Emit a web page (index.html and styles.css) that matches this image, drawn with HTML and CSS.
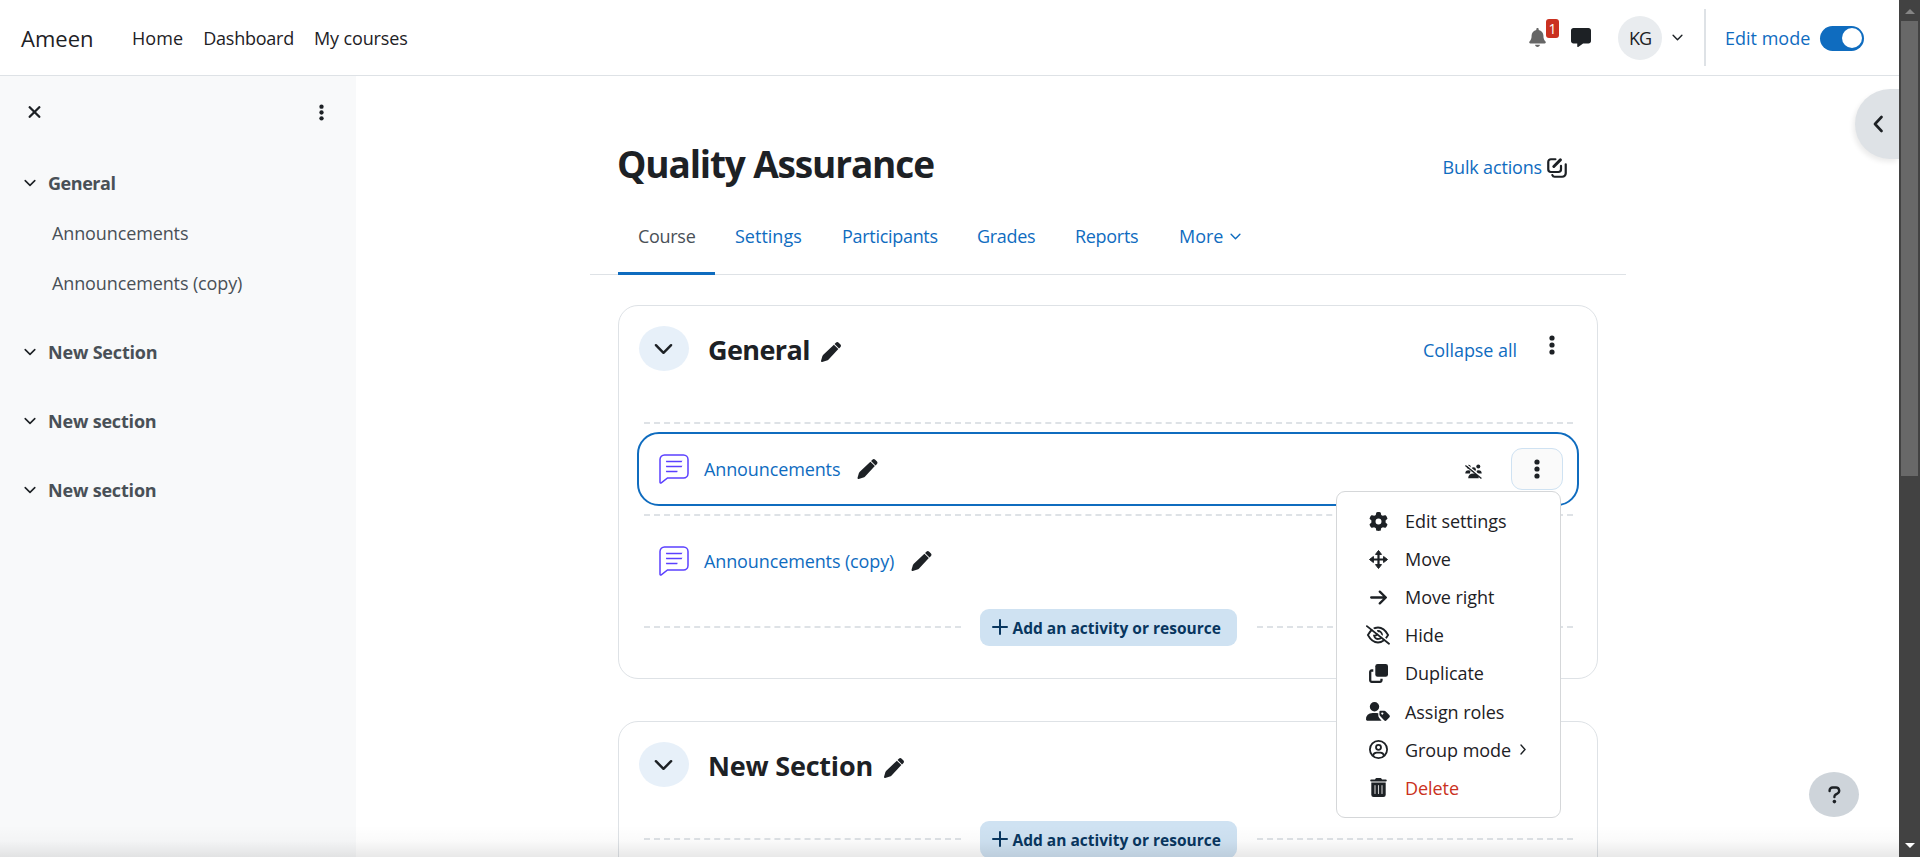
FILE: index.html
```html
<!DOCTYPE html>
<html lang="en">
<head>
<meta charset="utf-8">
<title>Quality Assurance</title>
<link rel="stylesheet" href="styles.css">
</head>
<body>
<svg class="defs" aria-hidden="true">
  <symbol id="chev" viewBox="0 0 20 12"><path d="M2 2l8 8 8-8" fill="none" stroke="currentColor" stroke-width="2.600" stroke-linecap="round" stroke-linejoin="round"/></symbol>
  <symbol id="dots" viewBox="0 0 6 20"><circle cx="3" cy="3" r="2.600"/><circle cx="3" cy="10" r="2.600"/><circle cx="3" cy="17" r="2.600"/></symbol>
  <symbol id="pen" viewBox="0 0 512 512"><path d="M380 19L347 51 461 165l32-32c25-25 25-49 0-74L453 19c-25-25-48-25-73 0zM330 68L58.600 323.500c-10.400 10.400-18 23.300-22.200 37.400L1 481.200C-1.500 489.700 .8 498.800 7 505s15.300 8.500 23.700 6.100l120.300-35.400c14.100-4.200 27-11.800 37.400-22.200L444 182z"/></symbol>
  <symbol id="forum" viewBox="0 0 30 30"><path d="M5.500 1h19A4.500 4.500 0 0 1 29 5.500v14a4.500 4.500 0 0 1-4.500 4.500H8.500L2.300 28.900Q1 29.500 1 28V5.500A4.500 4.500 0 0 1 5.500 1z" fill="none" stroke="#5b40ff" stroke-width="1.500"/><path d="M7 6.700h16.500M7 11.700h16.500M7 16.700h11.500" stroke="#cfc6ff" stroke-width="1"/><path d="M7.500 7.600h15M7.500 12.600h15M7.500 17.600h10.500" stroke="#5b40ff" stroke-width="1.200" stroke-linecap="round"/></symbol>
  <symbol id="plus" viewBox="0 0 16 16"><path d="M8 1v14M1 8h14" stroke="currentColor" stroke-width="2" stroke-linecap="round"/></symbol>
</svg>
<div class="window">
  <div class="page">
    <header class="topbar">
      <span class="brand">Ameen</span>
      <nav class="topnav"><span>Home</span><span>Dashboard</span><span>My courses</span></nav>
      <div class="tools">
        <span class="bell"><svg width="17" height="19" viewBox="0 0 448 512"><path d="M224 0c-17.700 0-32 14.300-32 32V51.200C119 66 64 130.600 64 208v18.800c0 47-17.300 92.400-48.500 127.600l-7.400 8.300c-8.400 9.400-10.400 22.900-5.300 34.400S19.400 416 32 416H416c12.600 0 24-7.400 29.200-18.900s3.100-25-5.300-34.400l-7.400-8.300C401.300 319.200 384 273.900 384 226.800V208c0-77.400-55-142-128-156.800V32c0-17.700-14.300-32-32-32zm45.300 493.300c12-12 18.700-28.300 18.700-45.300H160c0 17 6.700 33.300 18.700 45.300s28.300 18.700 45.300 18.700 33.300-6.700 45.300-18.700z"/></svg><b class="badge">1</b></span>
        <svg class="msg" width="20" height="19" viewBox="0 0 512 512" preserveAspectRatio="none"><path d="M64 0C28.700 0 0 28.700 0 64V352c0 35.300 28.700 64 64 64h96v80c0 6.100 3.400 11.600 8.800 14.300s11.900 2.100 16.800-1.500L309.300 416H448c35.300 0 64-28.700 64-64V64c0-35.300-28.700-64-64-64H64z"/></svg>
        <span class="avatar">KG</span>
        <svg class="userchev" width="11" height="7"><use href="#chev"/></svg>
        <span class="rule"></span>
        <span class="editmode">Edit mode</span>
        <span class="switch"><i></i></span>
      </div>
    </header>
    <div class="body">
      <aside class="sidebar">
        <div class="sidehead">
          <svg width="13" height="12" viewBox="0 0 12 12"><path d="M1.200 1.200l9.600 9.600M10.800 1.200L1.200 10.800" stroke="#1d2125" stroke-width="2.300" stroke-linecap="round"/></svg>
          <svg width="5" height="17"><use href="#dots"/></svg>
        </div>
        <div class="group"><div class="srow"><svg width="12" height="8"><use href="#chev"/></svg><b class="tight">General</b></div>
          <div class="sitem">Announcements</div><div class="sitem">Announcements (copy)</div></div>
        <div class="group"><div class="srow"><svg width="12" height="8"><use href="#chev"/></svg><b>New Section</b></div></div>
        <div class="group"><div class="srow"><svg width="12" height="8"><use href="#chev"/></svg><b>New section</b></div></div>
        <div class="group"><div class="srow"><svg width="12" height="8"><use href="#chev"/></svg><b>New section</b></div></div>
      </aside>
      <main class="content">
        <div class="titlerow"><h1>Quality Assurance</h1>
          <div class="bulk"><span>Bulk actions</span><svg width="20" height="20" viewBox="0 0 19 19" fill="none" stroke="#1d2125" stroke-width="2.100" stroke-linecap="round"><path d="M8 1.200H3.700A2.500 2.500 0 0 0 1.200 3.700v7.100a2.500 2.500 0 0 0 2.500 2.500h7.100a2.500 2.500 0 0 0 2.500-2.500V7.500"/><path d="M17.800 6v8.500a3.300 3.300 0 0 1-3.300 3.300H7.300a2.300 2.300 0 0 1-2.200-1.500"/><path d="M6.500 8L12.700 1.800" stroke-width="2.800"/></svg></div>
        </div>
        <nav class="tabs"><span class="tab active">Course</span><span class="tab">Settings</span><span class="tab">Participants</span><span class="tab">Grades</span><span class="tab">Reports</span><span class="tab">More</span><svg width="11" height="7"><use href="#chev"/></svg></nav>
        <section class="section first">
          <div class="sechead"><span class="disc"><svg width="19" height="12"><use href="#chev"/></svg></span><h2 class="tight">General</h2><svg class="pen" width="20" height="20"><use href="#pen"/></svg>
            <span class="collapse">Collapse all</span><svg class="secdots" width="6" height="20"><use href="#dots"/></svg></div>
          <div class="dash d1"></div>
          <div class="activity selected"><svg width="30" height="30"><use href="#forum"/></svg><span class="link">Announcements</span><svg class="pen" width="21" height="20" preserveAspectRatio="none"><use href="#pen"/></svg>
            <svg class="nogroup" width="17" height="15" viewBox="0 0 17 15"><circle cx="3.700" cy="2.800" r="2"/><circle cx="13.300" cy="2.600" r="2"/><circle cx="8.500" cy="5.600" r="2.400"/><path d="M.3 9.600Q.3 6.300 3.500 6.300q1.600 0 2 .8-.6 1.500-.4 2.500zM16.700 9.600q0-3.300-3.200-3.300-1.600 0-2 .8.600 1.500.4 2.500zM3.200 14.200q0-4.800 5.300-4.800t5.300 4.800z"/><path d="M1.200 .4L17 13.400" stroke="#fff" stroke-width="1.300"/><path d="M.4 1.400L16.400 14.500" stroke="#1d2125" stroke-width="1.300"/></svg>
            <span class="kebab"><svg width="6" height="20"><use href="#dots"/></svg></span></div>
          <div class="dash"></div>
          <div class="activity"><svg width="30" height="30"><use href="#forum"/></svg><span class="link">Announcements (copy)</span><svg class="pen" width="21" height="20" preserveAspectRatio="none"><use href="#pen"/></svg></div>
          <div class="addrow"><span class="dash"></span><span class="add"><svg width="16" height="16"><use href="#plus"/></svg><b>Add an activity or resource</b></span><span class="dash"></span></div>
        </section>
        <section class="section second">
          <div class="sechead"><span class="disc"><svg width="19" height="12"><use href="#chev"/></svg></span><h2>New Section</h2><svg class="pen" width="20" height="20"><use href="#pen"/></svg></div>
          <div class="addrow"><span class="dash"></span><span class="add"><svg width="16" height="16"><use href="#plus"/></svg><b>Add an activity or resource</b></span><span class="dash"></span></div>
        </section>
      </main>
    </div>
  </div>
  <div class="scrollbar"><span class="up"></span><span class="thumb"></span><span class="down"></span></div>

  <div class="drawer"><svg width="10" height="18" viewBox="0 0 10 18"><path d="M8.500 2L2 9l6.500 7" fill="none" stroke="#1d2125" stroke-width="2.600" stroke-linecap="round" stroke-linejoin="round"/></svg></div>
  <div class="help"><svg width="13" height="18" viewBox="0 0 13 18"><path d="M1.600 5V4.500A3 3 0 0 1 4.600 1.500h3.200a3.200 3.200 0 0 1 1.700 6L7.600 8.600Q6.400 9.400 6.400 11" fill="none" stroke="#1d2125" stroke-width="2.400" stroke-linecap="round"/><circle cx="6.400" cy="15.600" r="1.800"/></svg></div>

  <div class="menu">
    <div class="mi"><svg width="19" height="19" viewBox="0 0 512 512"><path fill-rule="evenodd" d="M495.900 166.600c3.200 8.700 .5 18.400-6.400 24.600l-43.300 39.400c1.100 8.300 1.700 16.800 1.700 25.400s-.6 17.100-1.700 25.400l43.300 39.400c6.900 6.200 9.600 15.900 6.400 24.600c-4.400 11.900-9.700 23.300-15.800 34.300l-4.700 8.100c-6.600 11-14 21.400-22.100 31.200c-5.900 7.200-15.700 9.600-24.500 6.800l-55.700-17.700c-13.400 10.300-28.200 18.900-44 25.400l-12.500 57.100c-2 9.100-9 16.300-18.200 17.800c-13.800 2.300-28 3.500-42.500 3.500s-28.700-1.200-42.500-3.500c-9.200-1.500-16.200-8.700-18.200-17.800l-12.500-57.100c-15.800-6.500-30.600-15.100-44-25.400L83.100 425.900c-8.800 2.800-18.600 .3-24.500-6.800c-8.100-9.800-15.500-20.200-22.100-31.200l-4.700-8.100c-6.100-11-11.400-22.400-15.800-34.300c-3.200-8.700-.5-18.400 6.400-24.600l43.300-39.400C64.600 273.100 64 264.600 64 256s.6-17.100 1.700-25.400L22.400 191.200c-6.900-6.200-9.600-15.900-6.400-24.600c4.400-11.900 9.700-23.300 15.800-34.300l4.700-8.100c6.600-11 14-21.400 22.100-31.200c5.900-7.200 15.700-9.600 24.500-6.800l55.700 17.700c13.400-10.300 28.200-18.900 44-25.400l12.500-57.100c2-9.100 9-16.300 18.200-17.800C227.300 1.200 241.500 0 256 0s28.700 1.200 42.500 3.500c9.200 1.500 16.200 8.700 18.200 17.800l12.500 57.100c15.800 6.500 30.600 15.100 44 25.400l55.700-17.700c8.800-2.800 18.600-.3 24.500 6.800c8.100 9.800 15.500 20.200 22.100 31.200l4.700 8.100c6.100 11 11.400 22.400 15.800 34.300zM256 336a80 80 0 1 0 0-160 80 80 0 1 0 0 160z"/></svg><span>Edit settings</span></div>
    <div class="mi"><svg width="19" height="19" viewBox="0 0 19 19"><path d="M9.500 3v13M3 9.500h13" stroke="#1d2125" stroke-width="2.200"/><path d="M9.500 .5l3 3.900h-6zM9.500 18.500l3-3.900h-6zM.5 9.500l3.900-3v6zM18.500 9.500l-3.900-3v6z" stroke="#1d2125" stroke-width="1" stroke-linejoin="round"/></svg><span>Move</span></div>
    <div class="mi"><svg width="17" height="15" viewBox="0 0 17 15" fill="none" stroke="#1d2125" stroke-width="2.300" stroke-linecap="round" stroke-linejoin="round"><path d="M1.200 7.500h14M9.800 1.600l6 5.900-6 5.900"/></svg><span>Move right</span></div>
    <div class="mi"><svg width="24" height="20" viewBox="0 0 24 20" fill="none" stroke="#1d2125" stroke-width="1.800"><path d="M1.900 10Q6 2.500 12 2.500t10.100 7.500Q18 17.500 12 17.500T1.900 10z"/><path d="M12 6a4 4 0 1 1-3.900 4.700Q12 11 12 6z"/><path d="M1.800 -.2L24 17.500" stroke="#fff" stroke-width="1.600"/><path d="M.9 1.100L23 18.800" stroke-linecap="round"/></svg><span>Hide</span></div>
    <div class="mi"><svg width="19" height="19" viewBox="0 0 19 19"><rect x="6.300" width="12.700" height="12.700" rx="2.300"/><path d="M4.300 6.500H2.800A1.500 1.500 0 0 0 1.200 8v8.300a1.500 1.500 0 0 0 1.600 1.500H11a1.500 1.500 0 0 0 1.500-1.500v-1.500" fill="none" stroke="#1d2125" stroke-width="2.300"/></svg><span>Duplicate</span></div>
    <div class="mi"><svg width="24" height="19" viewBox="0 0 24 19"><circle cx="8.500" cy="4.700" r="4.700"/><path d="M0 17.600Q0 11 6.700 11h3.600q1 0 2 .3v2.300q0 1.400 1 2.500l2.300 2.700H1.200Q0 18.700 0 17.600z"/><path fill-rule="evenodd" d="M13.400 9.700q0-.9.900-.9h4q.9 0 1.500.6l3.500 3.600q1.200 1.300 0 2.500l-2.700 2.800q-1.200 1.200-2.500 0l-4-4.200q-.7-.7-.7-1.600zM16.300 10.600a1 1 0 1 0 .01 0z"/></svg><span>Assign roles</span></div>
    <div class="mi"><svg width="19" height="19" viewBox="0 0 19 19" fill="none" stroke="#1d2125" stroke-width="1.800"><circle cx="9.500" cy="9.500" r="8.600"/><circle cx="9.500" cy="7.300" r="2.500"/><path d="M4 16q.5-3.300 3.700-3.300h3.600Q14.500 12.700 15 16"/></svg><span>Group mode</span><svg class="sub" width="6" height="11" viewBox="0 0 6 11"><path d="M1 1l4 4.500-4 4.500" fill="none" stroke="#1d2125" stroke-width="1.400" stroke-linecap="round"/></svg></div>
    <div class="mi danger"><svg width="17" height="19" viewBox="0 0 17 19"><path d="M5.300 .9Q5.700 0 6.500 0h4q.8 0 1.200.9l.3.500h3.700q1.100 0 1.100 1t-1.100 1H1.300q-1.100 0-1.100-1t1.100-1H5z"/><path d="M1.300 4.500h14.400v12.200q0 2.300-2.300 2.300H3.600q-2.300 0-2.300-2.300z"/><path d="M5 7.500v8M8.500 7.500v8M12 7.500v8" stroke="#ccc" stroke-width="1.100" stroke-linecap="round"/></svg><span>Delete</span></div>
  </div>
  <div class="fade"></div>
</div>
</body>
</html>
```
FILE: styles.css
```css
* { box-sizing: border-box; }
body { margin: 0; height: 857px; overflow: hidden; font-family: "Open Sans", "Noto Sans", sans-serif; font-size: 18px; line-height: 28px; letter-spacing: -.12px; color: #1d2125; background: #fff; }
.defs { position: absolute; width: 0; height: 0; }
svg { display: block; flex: none; fill: #1d2125; color: #1d2125; }
svg[fill="none"] { fill: none; }
h1, h2 { margin: 0; font-weight: 700; }
.window { position: relative; display: flex; width: 1920px; height: 857px; overflow: hidden; white-space: nowrap; }
.page { flex: 1; display: flex; flex-direction: column; min-width: 0; }

.topbar { flex: none; display: flex; align-items: center; height: 76px; padding-left: 21px; border-bottom: 1px solid #dee2e6; }
.brand { width: 111px; font-size: 22px; padding-top: 1px; letter-spacing: 0; }
.topnav { display: flex; gap: 20px; }
.topnav span:nth-child(1) { letter-spacing: .1px; }
.topnav span:nth-child(2) { letter-spacing: -.25px; }
.tools { display: flex; align-items: center; margin-left: auto; padding-right: 35px; }
.bell { position: relative; }
.bell svg { fill: #666; }
.badge { position: absolute; left: 17px; top: -9px; width: 13px; height: 19px; border-radius: 3px; background: #ca3120; color: #fff; font-size: 14px; font-weight: 400; line-height: 19px; text-align: center; }
.msg { margin-left: 25px; }
.avatar { width: 44px; height: 44px; margin-left: 27px; border-radius: 50%; background: #e9ecef; font-size: 18px; line-height: 45px; text-align: center; letter-spacing: -1px; }
.userchev { margin-left: 10px; }
.rule { width: 2px; height: 57px; margin-left: 21px; background: #dee2e6; }
.editmode { margin-left: 19px; width: 95px; color: #0f6cbf; letter-spacing: 0; }
.switch { display: flex; align-items: center; justify-content: flex-end; width: 44px; height: 25px; margin-top: 1px; padding-right: 2px; border-radius: 13px; background: #0f6cbf; }
.switch i { width: 20px; height: 20px; border-radius: 50%; background: #fff; }

.body { flex: 1; display: flex; min-height: 0; }
.sidebar { width: 356px; flex: none; background: #f8f9fa; }
.sidehead { display: flex; justify-content: space-between; align-items: center; height: 72px; padding: 0 32px 0 28px; }
.group { padding-top: 10px; margin-bottom: 9px; color: #495057; }
.srow { display: flex; align-items: center; gap: 12px; height: 50px; padding-left: 24px; letter-spacing: -.18px; }
.tight { letter-spacing: -.45px; }
.sitem { height: 50px; line-height: 50px; padding-left: 52px; }

.content { flex: none; width: 1036px; margin-left: 234px; padding-top: 63px; }
.titlerow { display: flex; align-items: center; justify-content: space-between; height: 50px; padding: 0 59px 0 27px; }
h1 { font-size: 37px; line-height: 50px; letter-spacing: -1.15px; }
.bulk { display: flex; align-items: center; gap: 5px; color: #0f6cbf; padding-top: 6px; letter-spacing: -.16px; }
.bulk svg { margin-top: 2px; }
.tabs { display: flex; align-items: center; height: 77px; margin-top: 9px; padding-left: 28px; border-bottom: 1px solid #dee2e6; color: #0f6cbf; }
.tabs svg { color: #0f6cbf; margin-left: -15px; }
.tab { height: 77px; line-height: 77px; padding: 0 20px; letter-spacing: -.3px; }
.tab.active { width: 97px; color: #495057; border-bottom: 3px solid #0f6cbf; }
.tab:nth-child(2) { width: 107px; letter-spacing: 0; }
.tab:nth-child(3) { width: 135px; }
.tab:nth-child(4) { width: 98px; }
.tab:nth-child(5) { width: 104px; }
.tab:nth-child(6) { width: 86px; letter-spacing: 0; }

.section { display: flex; flex-direction: column; width: 980px; margin: 0 28px; padding: 20px; border: 1px solid #dee2e6; border-radius: 20px; }
.first { height: 374px; margin-top: 30px; }
.second { height: 230px; margin-top: 42px; }
.sechead { display: flex; align-items: center; height: 45px; flex: none; }
.disc { display: flex; align-items: center; justify-content: center; width: 50px; height: 45px; border-radius: 50%; background: #e7f0f9; }
.disc svg { margin-top: 1px; margin-right: 1px; }
h2 { margin-left: 19px; padding-top: 2px; font-size: 27px; letter-spacing: -.2px; }
h2.tight { letter-spacing: -.6px; }
h2 + .pen { margin: 6px 0 0 11px; }
.collapse { margin-left: auto; color: #0f6cbf; padding-top: 3px; letter-spacing: -.05px; }
.secdots { margin: 0 22px 7px 32px; }
.dash { flex: none; height: 2px; margin: 0 4px 0 5px; border-top: 2px dashed #dee2e6; }
.d1 { margin-top: 51px; }
.activity { display: flex; align-items: center; flex: none; height: 74px; margin: 8px -2px; padding: 0 14px 0 20px; border: 2px solid transparent; border-radius: 22px; }
.activity.selected { border-color: #0f6cbf; }
.activity .link { margin-left: 15px; color: #0f6cbf; }
.activity .pen { margin-left: 17px; margin-top: -1px; }
.nogroup { margin-left: auto; margin-top: 4px; margin-right: 1px; }
.kebab { display: flex; align-items: center; justify-content: center; width: 52px; height: 42px; margin-left: 28px; border: 1px solid #cfe2f2; border-radius: 11px; background: #fafafa; }
.addrow { display: flex; align-items: center; height: 37px; margin: 3px 4px 0 5px; }
.second .addrow { margin-top: 34px; }
.addrow .dash { flex: 1; margin: -1px 0 0; }
.add { display: flex; align-items: center; width: 257px; height: 37px; margin: 0 20px 0 19px; padding-left: 12px; gap: 5px; border-radius: 9px; background: #cfe2f2; color: #08365f; font-size: 15.500px; letter-spacing: 0; }
.add svg { color: #08365f; margin-top: -1px; }

.scrollbar { display: flex; flex-direction: column; align-items: center; width: 21px; background: #424242; padding: 9px 0; }
.up, .down { border: 5px solid transparent; border-top: 0; border-bottom-color: #858585; }
.thumb { width: 17px; height: 455px; margin-top: 7px; background: #686868; }
.down { margin-top: auto; border-bottom: 0; border-top: 5px solid #fff; }

.drawer { position: absolute; left: 1855px; top: 89px; display: flex; align-items: center; width: 44px; height: 70px; padding-left: 18px; border-radius: 35px 0 0 35px; background: #dee2e6; box-shadow: -2px 3px 5px rgba(0,0,0,.08); clip-path: inset(-10px 0 -10px -10px); }
.help { position: absolute; left: 1809px; top: 772px; display: flex; align-items: center; justify-content: center; width: 50px; height: 45px; border-radius: 50%; background: #ced4da; }
.menu { position: absolute; left: 1336px; top: 491px; width: 225px; height: 327px; padding: 10px 0; border: 1px solid #d5d7d9; border-radius: 9px; background: #fff; }
.mi { display: grid; grid-template-columns: 24px auto auto 1fr; column-gap: 15px; align-items: center; height: 38.100px; padding-left: 29px; letter-spacing: -.05px; }
.mi > svg:first-child { justify-self: center; }
.mi .sub { margin-left: -6px; }
.danger { color: #ca3120; }
.fade { position: absolute; left: 0; bottom: 0; width: 1899px; height: 32px; background: linear-gradient(to bottom, rgba(0,0,0,0), rgba(0,0,0,.02) 50%, rgba(0,0,0,.09)); }
```
